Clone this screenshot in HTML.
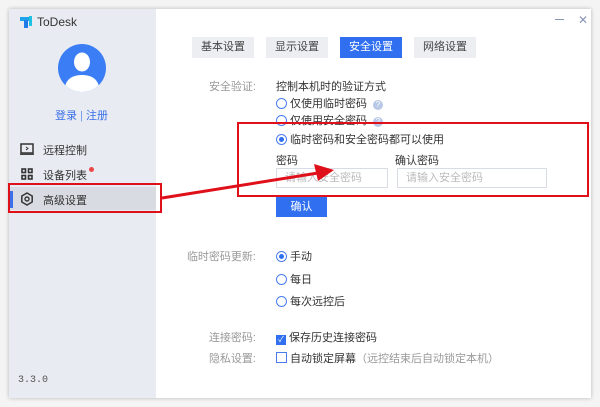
<!DOCTYPE html>
<html><head><meta charset="utf-8"><style>
body{margin:0;width:600px;height:407px;background:#f4f4f4;font-family:"Liberation Sans","Noto Sans CJK SC",sans-serif;font-size:11px;color:#333;position:relative;overflow:hidden}
.a{position:absolute;white-space:nowrap}
.win{position:absolute;left:9px;top:9px;width:582px;height:389px;background:#fff;box-shadow:0 0 4px rgba(0,0,0,.25)}
.side{position:absolute;left:9px;top:9px;width:147px;height:389px;background:#e9ebf2}
.tab{position:absolute;top:37px;width:62px;height:21px;background:#eceef2;text-align:center;line-height:21px;color:#444}
.lbl{color:#999;text-align:right;width:90px}
.rad{display:inline-block;width:9px;height:9px;border:1px solid #4a7cf0;border-radius:50%;vertical-align:-2px;margin-right:3px;position:relative;box-sizing:content-box}
.rad.on::after{content:"";position:absolute;left:2px;top:2px;width:5px;height:5px;border-radius:50%;background:#2f6ff0}
.q{display:inline-block;width:10px;height:10px;border-radius:50%;background:#b9c8e6;color:#fff;font-size:8px;text-align:center;line-height:10px;margin-left:6px;vertical-align:0}
.inp{position:absolute;height:20px;border:1px solid #d8dce4;box-sizing:border-box;color:#bbb;line-height:18px;padding-left:8px}
</style></head><body>
<div class="win"></div>
<div class="side"></div>
<svg class="a" style="left:20px;top:16px" width="13" height="13" viewBox="0 0 13 13"><rect x="0" y="1" width="9" height="4" fill="#1fa3e8"/><rect x="4" y="4" width="4" height="8" fill="#1f7be8"/><rect x="9" y="0" width="3" height="10" fill="#20c0e0"/></svg>
<div class="a" style="left:37px;top:15px;font-size:12px;color:#333">ToDesk</div>
<div class="a" style="left:578px;top:13px;color:#8a96b8;font-size:12px">✕</div>
<div class="a" style="left:555px;top:19px;width:9px;height:1px;background:#8a96b8"></div>
<svg class="a" style="left:58px;top:44px" width="48" height="48" viewBox="0 0 48 48"><defs><clipPath id="c"><circle cx="24" cy="24" r="24"/></clipPath></defs><circle cx="24" cy="24" r="24" fill="#3a7df4"/><g clip-path="url(#c)" fill="#fff"><ellipse cx="24" cy="18" rx="8" ry="9.5"/><path d="M6 48 C7 35 14 31 24 31 C34 31 41 35 42 48Z"/></g></svg>
<div class="a" style="left:55px;top:107px;color:#3a6fe8;font-size:11px">登录 <span style="color:#6b9af0">|</span> 注册</div>
<svg class="a" style="left:20px;top:143px" width="14" height="12" viewBox="0 0 14 12"><rect x="1" y="1" width="12" height="9" fill="none" stroke="#333" stroke-width="1.5"/><path d="M6 4l2 1.5L6 7" stroke="#333" fill="none"/><line x1="0" y1="11.3" x2="14" y2="11.3" stroke="#333" stroke-width="1.2"/></svg>
<div class="a" style="left:43px;top:142px;font-size:11px">远程控制</div>
<svg class="a" style="left:21px;top:168px" width="12" height="12"><g fill="none" stroke="#333" stroke-width="1.6"><rect x="1" y="1" width="3.5" height="3.5"/><rect x="7.5" y="1" width="3.5" height="3.5"/><rect x="1" y="7.5" width="3.5" height="3.5"/><rect x="7.5" y="7.5" width="3.5" height="3.5"/></g></svg>
<div class="a" style="left:43px;top:167px;font-size:11px">设备列表</div>
<div class="a" style="left:89px;top:167px;width:5px;height:5px;border-radius:50%;background:#e94848"></div>
<div class="a" style="left:10px;top:187px;width:146px;height:23px;background:#d9dbe2"></div>
<div class="a" style="left:10px;top:191px;width:3px;height:17px;background:#3a6fe8"></div>
<svg class="a" style="left:20px;top:192px" width="14" height="14" viewBox="0 0 14 14"><path d="M7 1 L12.2 4 L12.2 10 L7 13 L1.8 10 L1.8 4Z" fill="none" stroke="#333" stroke-width="1.5"/><circle cx="7" cy="7" r="2" fill="none" stroke="#333" stroke-width="1.4"/></svg>
<div class="a" style="left:43px;top:192px;font-size:11px">高级设置</div>
<div class="a" style="left:8px;top:183px;width:150px;height:26px;border:2px solid #e0101a"></div>
<div class="a" style="left:18px;top:375px;font-family:'Liberation Mono',monospace;font-size:10px;color:#555">3.3.0</div>

<div class="tab" style="left:192px">基本设置</div>
<div class="tab" style="left:266px">显示设置</div>
<div class="tab" style="left:340px;background:#2f6ff0;color:#fff">安全设置</div>
<div class="tab" style="left:414px">网络设置</div>

<div class="a lbl" style="left:166px;top:78px">安全验证:</div>
<div class="a" style="left:276px;top:78px">控制本机时的验证方式</div>
<div class="a" style="left:276px;top:95px"><span class="rad"></span>仅使用临时密码<span class="q">?</span></div>
<div class="a" style="left:276px;top:112px"><span class="rad"></span>仅使用安全密码<span class="q">?</span></div>
<div class="a" style="left:276px;top:131px"><span class="rad on"></span>临时密码和安全密码都可以使用</div>
<div class="a" style="left:276px;top:152px">密码</div>
<div class="a" style="left:395px;top:152px">确认密码</div>
<div class="inp" style="left:276px;top:168px;width:112px">请输入安全密码</div>
<div class="inp" style="left:397px;top:168px;width:150px">请输入安全密码</div>
<div class="a" style="left:276px;top:197px;width:51px;height:20px;background:#2f6ff0;color:#fff;text-align:center;line-height:20px">确认</div>
<div class="a" style="left:237px;top:122px;width:348px;height:71px;border:2px solid #e0101a"></div>
<svg class="a" style="left:0;top:0" width="600" height="407"><line x1="162" y1="198" x2="318" y2="173" stroke="#e0101a" stroke-width="3"/><path d="M334 170 L314 164 L318 181Z" fill="#e0101a"/></svg>

<div class="a lbl" style="left:166px;top:248px">临时密码更新:</div>
<div class="a" style="left:276px;top:248px"><span class="rad on"></span>手动</div>
<div class="a" style="left:276px;top:271px"><span class="rad"></span>每日</div>
<div class="a" style="left:276px;top:293px"><span class="rad"></span>每次远控后</div>
<div class="a lbl" style="left:166px;top:329px">连接密码:</div>
<div class="a" style="left:276px;top:329px"><span style="display:inline-block;width:10px;height:10px;background:#2f6ff0;color:#fff;font-size:8px;line-height:10px;text-align:center;vertical-align:-1px;margin-right:3px">✓</span>保存历史连接密码</div>
<div class="a lbl" style="left:166px;top:350px">隐私设置:</div>
<div class="a" style="left:276px;top:350px"><span style="display:inline-block;width:9px;height:9px;border:1px solid #4a7cf0;vertical-align:-1px;margin-right:3px"></span>自动锁定屏幕<span style="color:#999">（远控结束后自动锁定本机）</span></div>
</body></html>
